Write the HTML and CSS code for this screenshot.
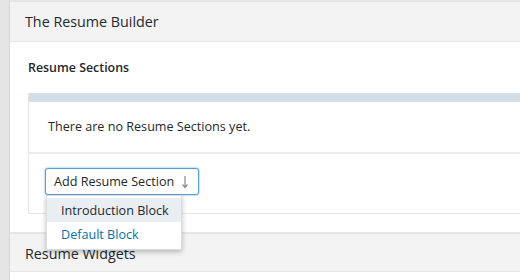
FILE: index.html
```html
<!DOCTYPE html>
<html>
<head>
<meta charset="utf-8">
<link rel="stylesheet" href="styles.css">
</head>
<body>
<div class="wrap">
  <div class="strip"></div>
  <div class="content">
    <div class="hd">The Resume Builder</div>
    <div class="inside">
      <div class="subtitle">Resume Sections</div>
      <div class="sections">
        <div class="bar"></div>
        <div class="empty">There are no Resume Sections yet.</div>
        <div class="addrow">
          <div class="select-wrap">
            <div class="select">
              <span>Add Resume Section</span>
              <svg class="arrow" width="8" height="14" viewBox="0 0 8 14"><path d="M4 1v11M1.5 9.5L4 12.5 6.5 9.5" fill="none" stroke="#8a8a8a" stroke-width="1.2"/></svg>
            </div>
            <ul class="menu">
              <li class="hover">Introduction Block</li>
              <li class="link">Default Block</li>
            </ul>
          </div>
        </div>
      </div>
    </div>
    <div class="hd hd2">Resume Widgets</div>
  </div>
</div>
</body>
</html>
```
FILE: styles.css
```css
html, body { margin: 0; padding: 0; background: #fff; }
body { font-family: "Open Sans", "Noto Sans", sans-serif; color: #23282d; }
.wrap { display: flex; height: 280px; overflow: hidden; }
.strip { width: 9px; background: #e5e5e5; border-right: 1px solid #d6d6d6; flex: none; }
.content { flex: 1; }
.hd {
  background: #f3f3f3;
  border-top: 2px solid #e6e6e6;
  border-bottom: 1px solid #e6e6e6;
  height: 39px;
  line-height: 40px;
  padding-left: 15px;
  font-size: 14.3px;
}
.inside { padding: 0 0 18px 18px; }
.subtitle { font-size: 12.4px; font-weight: 600; padding-top: 17px; height: 34px; line-height: 18px; }
.sections { border-left: 1px solid #e5e5e5; border-bottom: 1px solid #e5e5e5; }
.bar { height: 9px; background: #d3dfe8; }
.empty { height: 50px; line-height: 50px; padding-left: 19px; font-size: 12.6px; border-bottom: 2px solid #ececec; }
.addrow { height: 59px; padding: 14px 0 0 16px; box-sizing: border-box; }
.select-wrap { position: relative; width: 154px; }
.select {
  height: 27px; box-sizing: border-box;
  border: 1px solid #5b9dd9; border-radius: 3px;
  box-shadow: 0 0 2px rgba(30,140,190,.8);
  display: flex; align-items: center; justify-content: space-between;
  padding: 0 9px 0 8px; font-size: 12.6px; background: #fff;
}
.arrow { margin-top: 1px; }
.menu {
  position: absolute; left: 1px; top: 27px; width: 136px;
  margin: 0; padding: 2px 0 0; list-style: none;
  background: #fff; border: 1px solid #ddd; box-sizing: border-box;
  box-shadow: 0 2px 5px rgba(0,0,0,.25);
  font-size: 12.6px; height: 55px;
}
.menu li { height: 24px; line-height: 25px; padding-left: 14px; }
.menu .hover { background: #e9eef3; }
.menu .link { color: #0073aa; height: 26px; line-height: 26px; }
.hd2 { margin-top: 0; line-height: 40px; height: 37px; overflow: hidden; }
```
